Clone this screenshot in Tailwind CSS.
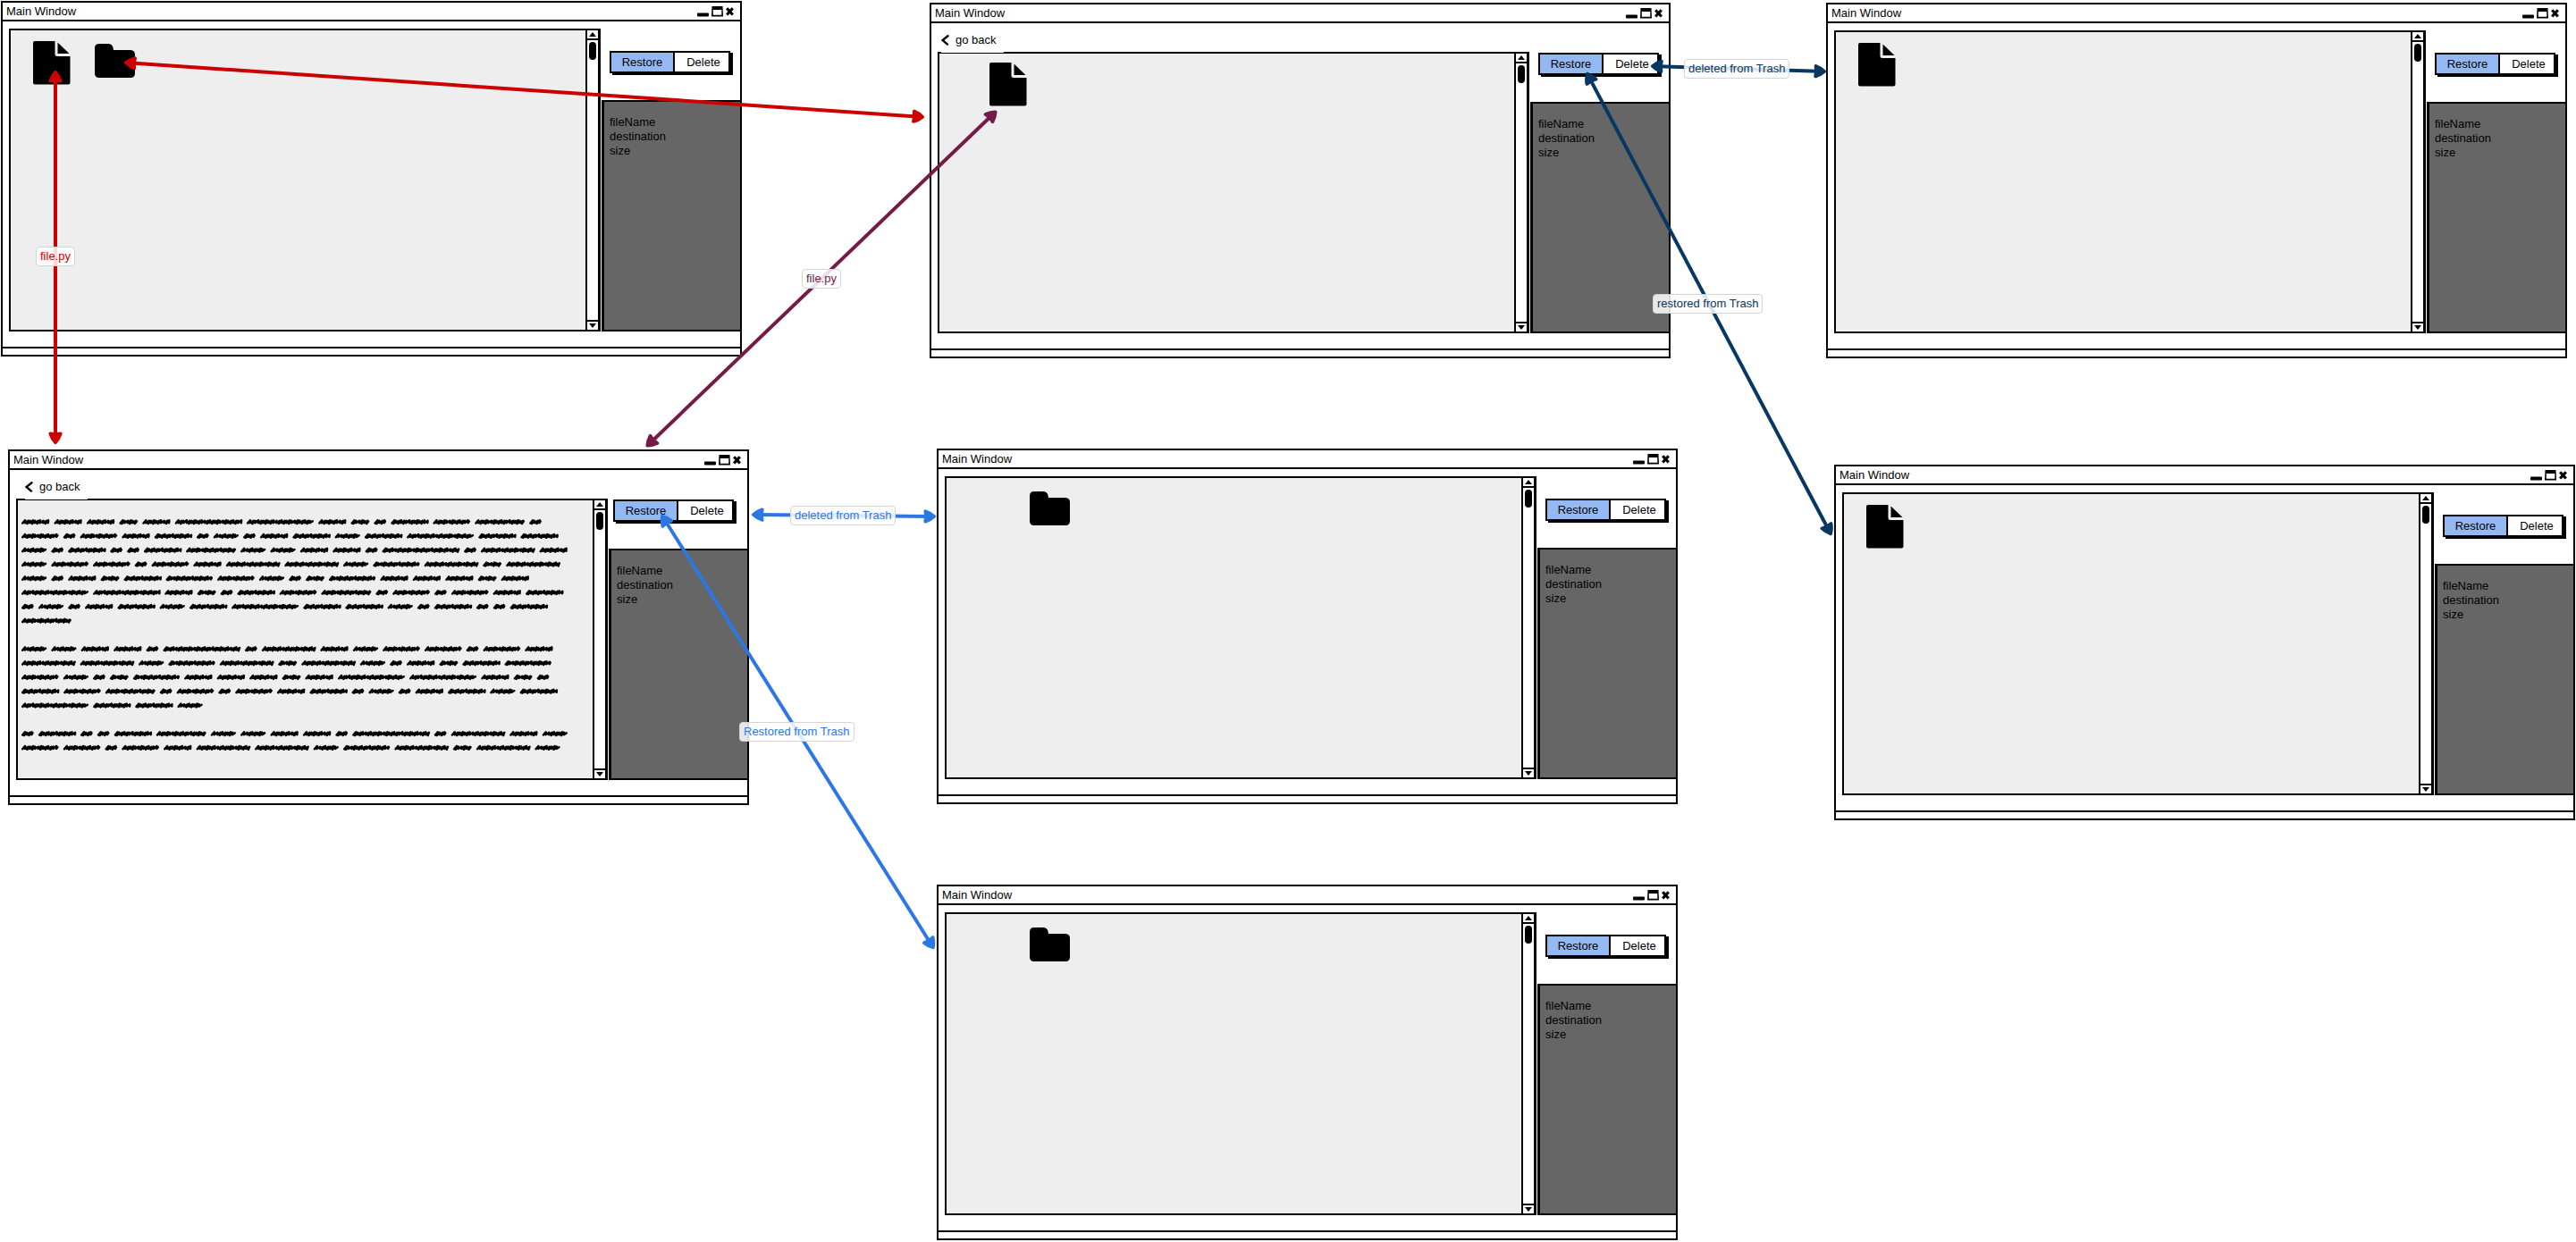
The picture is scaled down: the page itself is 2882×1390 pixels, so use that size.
<!DOCTYPE html>
<html lang="en">
<head>
<meta charset="utf-8">
<title>Trash flow</title>
<script src="https://cdn.jsdelivr.net/npm/@tailwindcss/browser@4"></script>
</head>
<body class="bg-white text-black text-[13px] leading-4 font-['Liberation_Sans',Arial,sans-serif]">
<svg class="hidden" aria-hidden="true">
  <symbol id="file" viewBox="0 0 42 49">
    <path d="M2 0H24.500V14.500Q24.500 17 27 17H41.500V46.500Q41.500 48.500 39.500 48.500H2Q0 48.500 0 46.500V2Q0 0 2 0Z"/>
    <path d="M27.500 1.500L40.500 14H27.500Z"/>
  </symbol>
  <symbol id="folder" viewBox="0 0 45 38">
    <path d="M5 0H16Q20.500 .5 21 7H40Q45 7.500 45 12V33Q45 38 40 38H5Q0 38 0 33V5Q0 0 5 0Z"/>
  </symbol>
  <symbol id="chevron" viewBox="0 0 9 12">
    <path d="M7.500 1.200L1.500 6L7 10.600" fill="none" stroke="#000" stroke-width="2.400" stroke-linecap="round"/>
  </symbol>
  <symbol id="minimize" viewBox="0 0 13 12"><rect x="0" y="7.500" width="13" height="4" rx="1"/></symbol>
  <symbol id="maximize" viewBox="0 0 13 12">
    <path fill-rule="evenodd" d="M.5 0H12.500L13 11.500H0ZM1.800 4V9.800H11.300V4Z"/>
  </symbol>
  <symbol id="close" viewBox="0 0 9 12"><path d="M1.200 2.200L7.800 9.500M7.800 2.200L1.200 9.500" stroke="#000" stroke-width="3.200"/></symbol>
</svg>

<main id="canvas" class="relative min-h-screen"></main>

<script>
const icons = {
  file: '<svg class="h-[49px] w-[42px]"><use href="#file"/></svg>',
  folder: '<svg class="mt-[3px] h-[38px] w-[45px]"><use href="#folder"/></svg>',
};

const windows = [
  { x: 1,    y: 1,   pad: 'pl-[25px] pt-3', items: ['file', 'folder'] },
  { x: 1040, y: 3,   pad: 'pl-[56px] pt-[10px]', items: ['file'], back: 'ml-1' },
  { x: 2043, y: 3,   pad: 'pl-[25px] pt-3', items: ['file'] },
  { x: 9,    y: 503, pad: 'pl-1 pt-[18px]', items: [], back: 'ml-2.5', text: true, actions: 'pl-[5px]' },
  { x: 1048, y: 502, pad: 'pl-[93px] pt-3', items: ['folder'] },
  { x: 2052, y: 520, pad: 'pl-[25px] pt-3', items: ['file'] },
  { x: 1048, y: 990, pad: 'pl-[93px] pt-3', items: ['folder'] },
];

// Scribbled words: each letter is a word of the width given here.
const widths = { a: 31.3, b: 20.8, c: 13.7, d: 42, n: 41.6, e: 28.2, f: 75, g: 55.8, h: 60.4, i: 52.2, j: 86.4 };
const lines = [
  'aaabaffabcdngc', 'ncnadcecadedfdd', 'ecdccdgeeaacjcha', 'enncnahheihbh',
  'ecabdinecbiaaaba', 'ffabcdngcncnad', 'cecadedfddecdccd', 'g', '',
  'eeaacjchaenncna', 'hheihbhecabdi', 'necbiaaabaffabc', 'dngcncnadcecaded', 'fdde', '',
  'cdccdgeeaacjchae', 'nncnahheihbhe',
];

function scribble(x, y, type) {
  const end = x + widths[type];
  const seed = type.charCodeAt(0);
  let px = x + 1.2;
  let k = 0;
  let d = `M${px.toFixed(1)} ${(y + 1.5).toFixed(1)}`;
  while (px + 3.4 < end) {
    const dense = ((k * 3 + seed) % 7) < 3;
    const top = y - (k % 3 === 0 ? 1.8 : 1.1);
    d += `L${(px + 2.8).toFixed(1)} ${top.toFixed(1)}L${(px + (dense ? 1.6 : 2.6)).toFixed(1)} ${(y + (dense ? 2 : 1.2)).toFixed(1)}`;
    px += dense ? 2 : 3.6;
    k++;
  }
  return d + `L${(end - 1.2).toFixed(1)} ${(y - .6).toFixed(1)}`;
}

function scribbleText() {
  let d = '';
  lines.forEach((line, row) => {
    let x = 0;
    for (const type of line) {
      d += scribble(x, 6 + row * 15.8, type);
      x += widths[type] + 5.15;
    }
  });
  return `<svg class="h-[268px] w-full" role="img" aria-label="File contents"><path d="${d}" fill="none" stroke="#000" stroke-width="2.5" stroke-linecap="round" stroke-linejoin="round"/></svg>`;
}

const windowHtml = w => `
<section class="absolute flex w-[829px] flex-col border-2 border-black bg-white" style="left:${w.x}px;top:${w.y}px">
  <header class="flex h-[21px] items-center border-b-2 border-black pl-1 pr-[7px]">
    <h2 class="flex-1">Main Window</h2>
    <div class="flex gap-[3px]">
      <button aria-label="Minimize"><svg class="h-3 w-[13px]"><use href="#minimize"/></svg></button>
      <button aria-label="Maximize"><svg class="h-3 w-[13px]"><use href="#maximize"/></svg></button>
      <button aria-label="Close"><svg class="h-3 w-[9px]"><use href="#close"/></svg></button>
    </div>
  </header>
  <div class="mt-2 mb-[17px] flex h-[339px] gap-px">
    <div class="flex flex-1 flex-col items-start pl-[7px]">
      ${w.back ? `<a href="#" class="relative -mb-px flex h-[25px] items-center gap-[7px] bg-white pr-2 pb-1 ${w.back}"><svg class="h-3 w-[9px]"><use href="#chevron"/></svg>go back</a>` : ''}
      <div class="flex w-full flex-1 border-2 border-r-3 border-black bg-[#eee]">
        <div class="flex flex-1 items-start gap-[27px] ${w.pad}">${w.text ? scribbleText() : w.items.map(i => icons[i]).join('')}</div>
        <div class="flex w-[14px] flex-col border-l-2 border-black bg-white">
          <button aria-label="Scroll up" class="flex h-[11px] items-center justify-center border-b-2 border-black"><svg class="h-[5px] w-2" viewBox="0 0 8 5"><path d="M4 0L8 5H0Z"/></svg></button>
          <div class="flex-1 px-0.5 pt-0.5"><div class="h-5 rounded-sm bg-black"></div></div>
          <button aria-label="Scroll down" class="flex h-[11px] items-center justify-center border-t-2 border-black"><svg class="h-[5px] w-2" viewBox="0 0 8 5"><path d="M0 0H8L4 5Z"/></svg></button>
        </div>
      </div>
    </div>
    <aside class="flex w-[155px] flex-col">
      <div class="flex h-20 items-start pt-[25px] ${w.actions || 'pl-[9px]'}">
        <div class="flex h-[25px] w-[135px] border-2 border-black bg-white shadow-[3px_2px_0_#000]">
          <button class="w-[71px] border-r-2 border-black bg-[#94b9f2]">Restore</button>
          <button class="flex-1 pl-1">Delete</button>
        </div>
      </div>
      <div class="flex-1 border-2 border-l-3 border-r-0 border-black bg-[#666] pl-1.5 pt-[15px]">
        <p>fileName</p>
        <p>destination</p>
        <p>size</p>
      </div>
    </aside>
  </div>
  <footer class="h-[9px] border-t-2 border-black"></footer>
</section>`;

const arrows = [
  ['#cc0000', 62, 79, 62, 497],
  ['#cc0000', 139, 70, 1034, 131],
  ['#741b47', 723, 500, 1115, 124],
  ['#073763', 1847, 74, 2043, 80],
  ['#073763', 1775, 81, 2049, 599],
  ['#2b78e4', 841, 576, 1047, 578],
  ['#2b78e4', 740, 576, 1045, 1062],
];

const arrowHtml = ([color, x1, y1, x2, y2]) => {
  const len = Math.hypot(x2 - x1, y2 - y1);
  const ux = (x2 - x1) / len, uy = (y2 - y1) / len;
  const angle = Math.atan2(uy, ux) * 180 / Math.PI;
  const head = 'M-.8 -1.500Q1.200 0 -.8 1.500Q-5 5.500 -11 7.500Q-14 8 -13.500 5L-12.800 0L-13.500 -5Q-14 -8 -11 -7.500Q-5 -5.500 -.8 -1.500Z';
  return `<g fill="${color}">
    <line x1="${x1 + ux * 8}" y1="${y1 + uy * 8}" x2="${x2 - ux * 8}" y2="${y2 - uy * 8}" stroke="${color}" stroke-width="4"/>
    <path d="${head}" transform="translate(${x2} ${y2}) rotate(${angle})"/>
    <path d="${head}" transform="translate(${x1} ${y1}) rotate(${angle + 180})"/>
  </g>`;
};

const labels = [
  ['file.py', 'text-[#cc0000]', 40, 276],
  ['file.py', 'text-[#741b47]', 897, 301],
  ['deleted from Trash', 'text-[#073763]', 1884, 66],
  ['restored from Trash', 'text-[#073763]', 1849, 329],
  ['deleted from Trash', 'text-[#2b78e4]', 884, 566],
  ['Restored from Trash', 'text-[#2b78e4]', 827, 808],
];

document.getElementById('canvas').innerHTML =
  windows.map(windowHtml).join('') +
  `<svg class="pointer-events-none absolute inset-0 h-full w-full overflow-visible" aria-hidden="true">${arrows.map(arrowHtml).join('')}</svg>` +
  labels.map(([text, color, x, y]) =>
    `<span class="absolute rounded border border-[#d4d4d4] bg-white/85 px-1 py-0.5 whitespace-nowrap ${color}" style="left:${x}px;top:${y}px">${text}</span>`).join('');
</script>
</body>
</html>
